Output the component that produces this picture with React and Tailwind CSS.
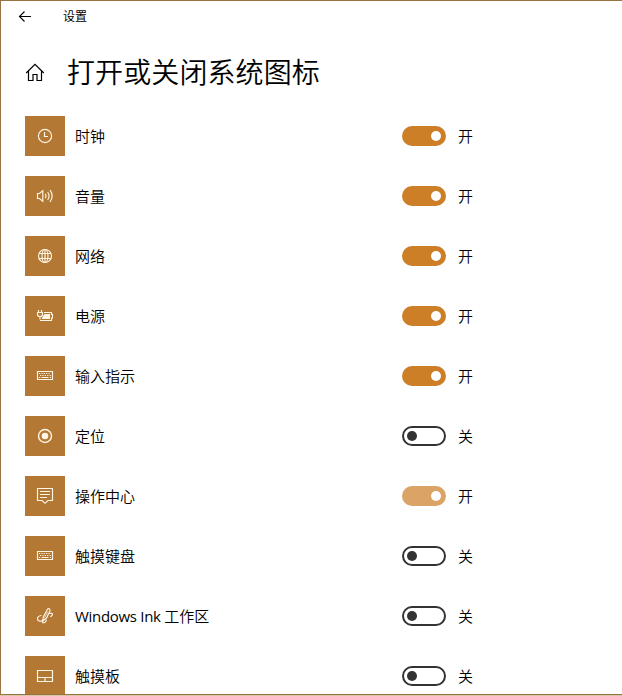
import clsx from 'clsx';

const ClockIcon = () => (
  <>
    <circle cx="10" cy="10" r="6.6" />
    <path d="M9.5 6v4.5H13" />
  </>
);

const VolumeIcon = () => (
  <>
    <path d="M2.5 7.5h2L7.8 4.8v10.4L4.5 12.5h-2z" />
    <path d="M10.2 7.8q1.6 2.2 0 4.4M12.6 6q3 4 0 8M15 4.2q4.4 5.8 0 11.6" />
  </>
);

const GlobeIcon = () => (
  <>
    <circle cx="10" cy="10" r="6.5" />
    <ellipse cx="10" cy="10" rx="3" ry="6.5" />
    <path d="M10 3.5v13M4 7.5h12M4 12.5h12" />
  </>
);

const PowerIcon = () => (
  <>
    <path d="M3.5 4v2.5M6.5 4v2.5" />
    <path d="M2.5 6.5h5v2q0 2-2.5 2t-2.5-2z" />
    <path d="M5 10.5v3M5 14.5h11.5v-2.5h1V8.5h-1v-2H9" />
    <path d="M9.5 8H15v5H7v-1.2z" fill="currentColor" stroke="none" />
  </>
);

const KeyboardIcon = () => (
  <>
    <path d="M2.5 5.5h15v8h-15z" />
    <path d="M4 7.5h12M5 9.5h11" strokeDasharray="1.2 1.2" />
    <path d="M4 11.5h1.2M6.5 11.5h7M14.8 11.5H16" />
  </>
);

const LocationIcon = () => (
  <>
    <circle cx="10" cy="10" r="6.5" strokeWidth="1.4" />
    <circle cx="10" cy="10" r="3.3" fill="currentColor" stroke="none" />
  </>
);

const ActionCenterIcon = () => (
  <>
    <path d="M2.5 2.5h15v12h-4.5L10 17.3l-3-2.8H2.5z" />
    <path d="M5 5.5h10M5 8.5h10M5 11.5h7" />
  </>
);

const InkIcon = () => (
  <>
    <path d="M7.5 15 8.5 10.5l3.8-7q.9-1.3 2-.7t.6 2.2L11.5 12z" />
    <path d="m12.8 5.5-3.3 6.3" strokeWidth="0.8" />
    <path d="M6.5 9.5q-4 .5-4 3c0 3 3 3 5 2.3M7.8 14.5v2.2h1.7q1.8-.6 1.8-3.2" />
    <path d="M14.3 7.5q3-.6 3.2.8.1 1.5-2.3 2.4" />
  </>
);

const TouchpadIcon = () => (
  <>
    <path d="M2.5 4.5h15v11h-15z" />
    <path d="M2.5 11.5h15M10 11.5v4" />
  </>
);

const items = [
  { label: '时钟', icon: ClockIcon, on: true },
  { label: '音量', icon: VolumeIcon, on: true },
  { label: '网络', icon: GlobeIcon, on: true },
  { label: '电源', icon: PowerIcon, on: true },
  { label: '输入指示', icon: KeyboardIcon, on: true },
  { label: '定位', icon: LocationIcon, on: false },
  { label: '操作中心', icon: ActionCenterIcon, on: true, disabled: true },
  { label: '触摸键盘', icon: KeyboardIcon, on: false },
  { product: 'Windows Ink', label: '工作区', icon: InkIcon, on: false },
  { label: '触摸板', icon: TouchpadIcon, on: false },
];

function Toggle({ on, disabled }) {
  return (
    <button
      role="switch"
      aria-checked={on}
      disabled={disabled}
      className={clsx(
        'flex h-5 w-11 items-center rounded-full',
        on ? 'justify-end px-[5px]' : 'border-2 border-[#333333] px-[3px]',
        on && (disabled ? 'bg-[#dca366]' : 'bg-[#cd7f27]')
      )}
    >
      <span className={clsx('size-2.5 rounded-full', on ? 'bg-white' : 'bg-[#333333]')} />
    </button>
  );
}

function SettingRow({ item }) {
  const Icon = item.icon;

  return (
    <div className="flex h-10 shrink-0 items-center">
      <div className="flex size-10 items-center justify-center bg-[#b37834] text-[#fff6e6]">
        <svg viewBox="0 0 20 20" className="size-5" fill="none" stroke="currentColor" strokeWidth="1.15">
          <Icon />
        </svg>
      </div>
      <span className="ml-2.5 w-[327px] text-[15px]">
        {item.product && <span className="font-normal tracking-[-0.3px]">{item.product} </span>}
        {item.label}
      </span>
      <Toggle on={item.on} disabled={item.disabled} />
      <span className="ml-3 text-[15px]">{item.on ? '开' : '关'}</span>
    </div>
  );
}

export default function App() {
  return (
    <div className="h-[696px] w-[622px] overflow-hidden border-b border-[#d9c6a8] bg-white font-['Open_Sans','Noto_Sans_CJK_SC',sans-serif] font-[350] text-black">
      <div className="flex h-[695px] flex-col overflow-hidden border-y border-l border-[#9a7140] pl-6">
        <header className="flex h-8 shrink-0 items-center">
          <svg viewBox="0 0 14 14" className="-mt-[3px] -ml-[7px] size-3.5" fill="none" stroke="currentColor" strokeWidth="1.1">
            <path d="M13 7.5H1.5M6.5 2.5l-5 5 5 5" />
          </svg>
          <span className="ml-[31px] text-xs font-normal">设置</span>
        </header>

        <div className="flex h-[78px] shrink-0 items-center">
          <svg viewBox="0 0 20 20" className="size-5" fill="none" stroke="currentColor" strokeWidth="1.2">
            <path d="m1.2 11 8.8-8.7 8.8 8.7M3.5 9v9.5H8v-6h4v6h4.5V9" />
          </svg>
          <h1 className="ml-[22px] text-[28px] leading-10 tracking-[0.1px]">打开或关闭系统图标</h1>
        </div>

        <div className="mt-[5px] flex flex-col gap-5">
          {items.map((item) => (
            <SettingRow key={item.label} item={item} />
          ))}
        </div>
      </div>
    </div>
  );
}
